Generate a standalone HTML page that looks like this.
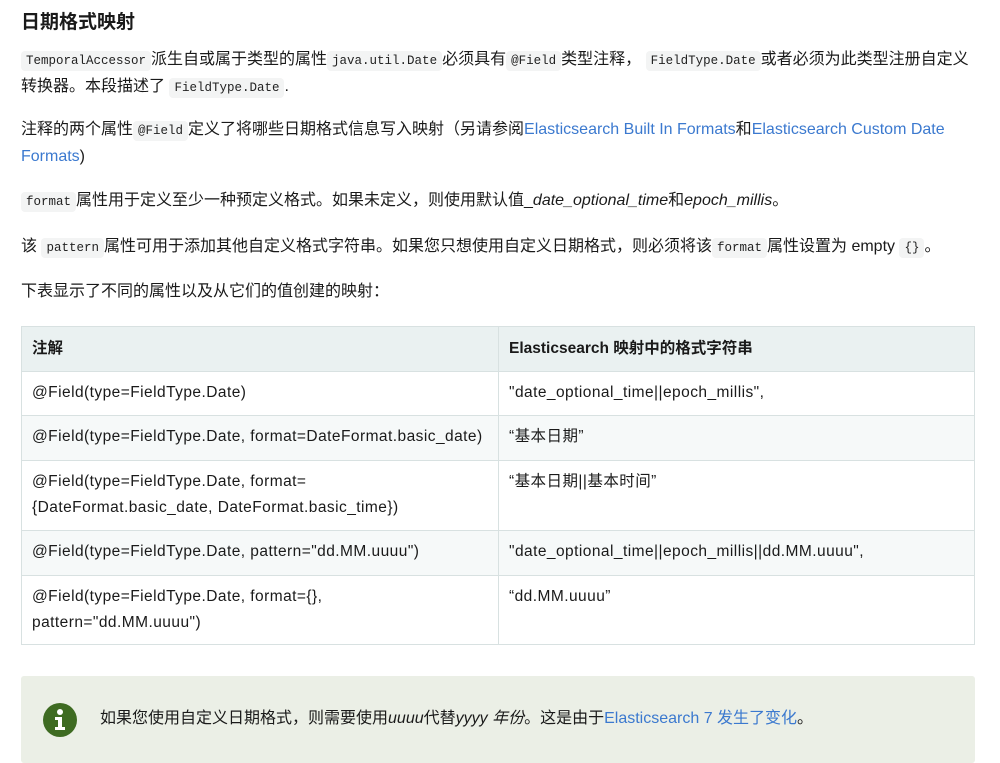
<!DOCTYPE html>
<html><head><meta charset="utf-8"><style>
body{margin:0;background:#fff;width:1000px;height:763px;overflow:hidden;position:relative;font-family:"Liberation Sans","Noto Sans CJK SC",sans-serif;color:#1a1a1a;font-size:16px;}
.p{position:absolute;left:21px;width:955px;line-height:26px;white-space:nowrap;}
code{font-family:"Liberation Mono","Noto Sans CJK SC",monospace;font-size:12.5px;background:#f3f4f4;border-radius:4px;padding:3px 5px;color:#222;}
a{color:#3b79cf;text-decoration:none;}
h2{position:absolute;left:21px;top:7px;margin:0;font-size:19px;font-weight:bold;}
table{position:absolute;left:21px;top:326px;width:954px;border-collapse:collapse;font-size:15.5px;letter-spacing:0.45px;}
td,th{border:1px solid #d8e1e1;padding:0 10px;text-align:left;vertical-align:top;line-height:26px;}
th{background:#eaf1f1;height:44px;vertical-align:middle;letter-spacing:0;}
tr.a td{background:#fff}tr.b td{background:#f6f9f9}
.box{position:absolute;left:21px;top:676px;width:954px;height:87px;background:#ebefe6;border-radius:3px;}
</style></head><body>
<h2>日期格式映射</h2>
<div class="p" style="top:47px"><code>TemporalAccessor</code>派生自或属于类型的属性<code>java.util.Date</code>必须具有<code>@Field</code>类型注释， <code>FieldType.Date</code>或者必须为此类型注册自定义<br>转换器。本段描述了 <code>FieldType.Date</code>.</div>
<div class="p" style="top:117px">注释的两个属性<code>@Field</code>定义了将哪些日期格式信息写入映射（另请参阅<a>Elasticsearch Built In Formats</a>和<a>Elasticsearch Custom Date</a><br><a>Formats</a>)</div>
<div class="p" style="top:188px"><code>format</code>属性用于定义至少一种预定义格式。如果未定义，则使用默认值_<i>date_optional_time</i>和<i>epoch_millis</i>。</div>
<div class="p" style="top:234px">该 <code>pattern</code>属性可用于添加其他自定义格式字符串。如果您只想使用自定义日期格式，则必须将该<code>format</code>属性设置为 empty <code>{}</code>。</div>
<div class="p" style="top:279px">下表显示了不同的属性以及从它们的值创建的映射：</div>
<table>
<tr><th style="width:456px">注解</th><th>Elasticsearch 映射中的格式字符串</th></tr>
<tr class="a"><td style="height:44px;padding-top:8px;box-sizing:border-box">@Field(type=FieldType.Date)</td><td style="padding-top:8px">"date_optional_time||epoch_millis",</td></tr>
<tr class="b"><td style="height:45px;padding-top:8px;box-sizing:border-box">@Field(type=FieldType.Date, format=DateFormat.basic_date)</td><td style="padding-top:8px">“基本日期”</td></tr>
<tr class="a"><td style="height:70px;padding-top:8px;box-sizing:border-box">@Field(type=FieldType.Date, format=<br>{DateFormat.basic_date, DateFormat.basic_time})</td><td style="padding-top:8px">“基本日期||基本时间”</td></tr>
<tr class="b"><td style="height:45px;padding-top:8px;box-sizing:border-box">@Field(type=FieldType.Date, pattern="dd.MM.uuuu")</td><td style="padding-top:8px">"date_optional_time||epoch_millis||dd.MM.uuuu",</td></tr>
<tr class="a"><td style="height:69px;padding-top:8px;box-sizing:border-box">@Field(type=FieldType.Date, format={},<br>pattern="dd.MM.uuuu")</td><td style="padding-top:8px">“dd.MM.uuuu”</td></tr>
</table>
<div class="box">
<svg style="position:absolute;left:22px;top:27px" width="34" height="34" viewBox="0 0 34 34"><circle cx="17" cy="17" r="17" fill="#3e6b22"/><circle cx="17" cy="9" r="3" fill="#fff"/><path d="M12 14h7v10h3v3H12v-3h3v-7h-3z" fill="#fff"/></svg>
<div style="position:absolute;left:79px;top:30px;line-height:26px;font-size:16px;white-space:nowrap">如果您使用自定义日期格式，则需要使用<i>uuuu</i>代替<i>yyyy 年份</i>。这是由于<a>Elasticsearch 7 发生了变化</a>。</div>
</div>
</body></html>
